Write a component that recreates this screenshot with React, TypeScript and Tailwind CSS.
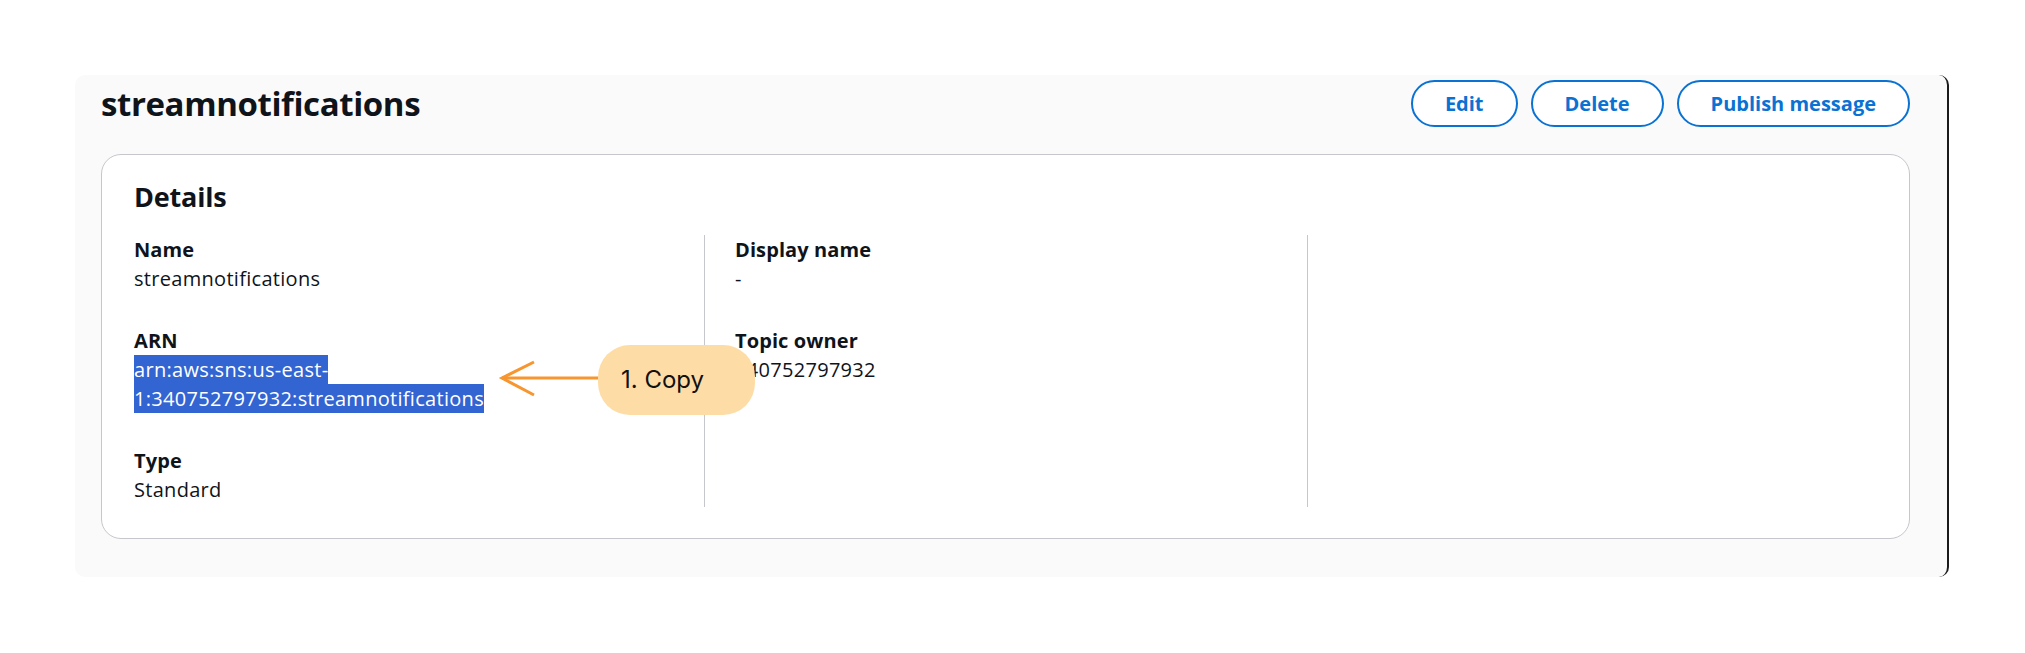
import React from 'react';

const font = { fontFamily: '"Open Sans", "Noto Sans", sans-serif' };

const Field: React.FC<{ label: string; children: React.ReactNode; first?: boolean }> = ({ label, children, first }) => (
  <div className={first ? '' : 'mt-[33px]'}>
    <div className="text-[20px] leading-[29px] font-bold text-[#0f141a] tracking-[0.1px]">{label}</div>
    <div className="text-[20px] leading-[29px] text-[#0f141a] tracking-[0.3px]">{children}</div>
  </div>
);

const App: React.FC = () => {
  return (
    <div className="relative w-[2025px] h-[653px] bg-white" style={font}>
      <div className="pt-[75px] pl-[75px]">
        <div className="w-[1874px] h-[502px] bg-[#fafafa] rounded-[10px] border-r-2 border-r-[#1b1b1b] pl-[26px] pr-[37px] pt-[5px]">
          {/* Header */}
          <div className="flex items-center justify-between">
            <h1 className="text-[33px] font-bold text-[#0f141a] leading-[47px] tracking-[-0.4px]">streamnotifications</h1>
            <div className="flex gap-[13px]">
              {['Edit', 'Delete', 'Publish message'].map((b) => (
                <button
                  key={b}
                  className="h-[47px] px-[32px] rounded-full border-2 border-[#0972d3] text-[#0972d3] text-[20px] font-bold bg-white"
                >
                  {b}
                </button>
              ))}
            </div>
          </div>

          {/* Details card */}
          <div className="mt-[27px] bg-white border-[1.5px] border-[#c6c6cd] rounded-[20px] pl-[32px] pr-[32px] pt-[26px] pb-[31px]">
            <h2 className="text-[27px] leading-[32px] font-bold text-[#0f141a] tracking-[-0.2px]">Details</h2>
            <div className="mt-[22px] grid grid-cols-[570px_603px_1fr]">
              <div>
                <Field label="Name" first>streamnotifications</Field>
                <Field label="ARN">
                  <span className="block w-fit bg-[#3264d2] text-white">arn:aws:sns:us-east-</span>
                  <span className="block w-fit bg-[#3264d2] text-white">1:340752797932:streamnotifications</span>
                </Field>
                <Field label="Type">Standard</Field>
              </div>
              <div className="border-l border-[#c6c6cd] pl-[30px]">
                <Field label="Display name" first>-</Field>
                <Field label="Topic owner">340752797932</Field>
              </div>
              <div className="border-l border-[#c6c6cd] h-[272px]" />
            </div>
          </div>
        </div>
      </div>

      {/* Annotation arrow */}
      <svg className="absolute left-[498px] top-[358px]" width="102" height="40" viewBox="0 0 102 40">
        <line x1="4" y1="20" x2="101" y2="20" stroke="#f7952f" strokeWidth="3" />
        <polyline points="36,4 4,20 36,37" fill="none" stroke="#f7952f" strokeWidth="3" />
      </svg>

      {/* Annotation callout */}
      <div
        className="absolute left-[598px] top-[345px] w-[157px] h-[70px] rounded-[32px] bg-[#fedca6] flex items-center pl-[23px] text-[24px] text-[#111]"
        style={{ fontFamily: 'Inter, sans-serif' }}
      >
        1. Copy
      </div>
    </div>
  );
};

export default App;
